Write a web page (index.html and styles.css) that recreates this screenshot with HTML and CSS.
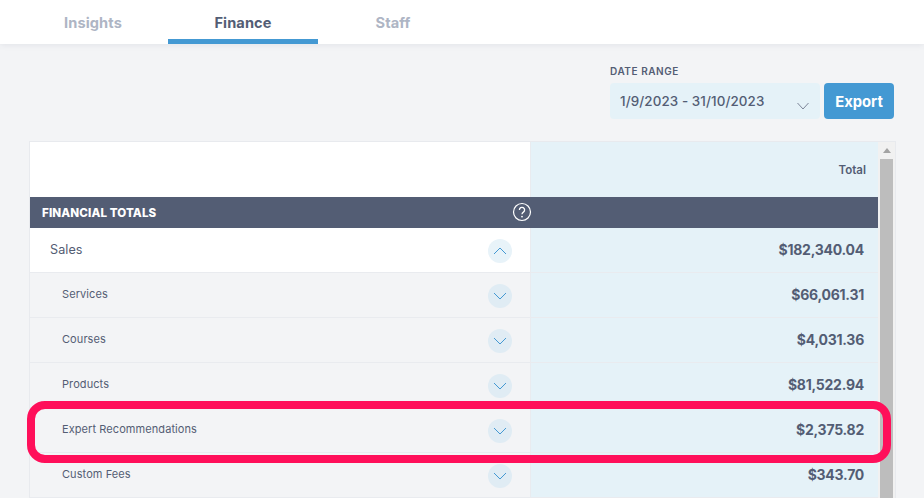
FILE: index.html
```html
<!DOCTYPE html>
<html lang="en">
<head>
<meta charset="utf-8">
<title>Finance</title>
<link rel="stylesheet" href="styles.css">
</head>
<body>
<nav class="tabs">
  <a class="tab tab-first">Insights</a>
  <a class="tab active">Finance</a>
  <a class="tab">Staff</a>
</nav>
<main class="page">
  <div class="toolbar">
    <div class="field">
      <label class="field-label">DATE RANGE</label>
      <div class="select">
        <span>1/9/2023 - 31/10/2023</span>
        <svg class="select-caret" width="14" height="8" viewBox="0 0 14 8"><path d="M1.5 1l5.5 6 5.5-6" fill="none" stroke="#7d8699" stroke-width="1"/></svg>
      </div>
    </div>
    <button class="export">Export</button>
  </div>
  <div class="table-wrap">
    <div class="table">
      <div class="row head"><div class="label"></div><div class="value total">Total</div></div>
      <div class="section">
        <span>FINANCIAL TOTALS</span>
        <svg class="help" width="20" height="20" viewBox="0 0 20 20"><circle cx="10" cy="10" r="8.5" fill="none" stroke="#fff" stroke-width="1.2"/><path d="M7.4 7.9a2.6 2.6 0 1 1 4 2.2c-.9.6-1.4 1-1.4 2.1" fill="none" stroke="#fff" stroke-width="1.3"/><circle cx="10" cy="14.6" r=".9" fill="#fff"/></svg>
      </div>
      <div class="row main">
        <div class="label"><span>Sales</span><span class="toggle"><svg width="14" height="8" viewBox="0 0 14 8"><path d="M1 7l6-6 6 6"/></svg></span></div>
        <div class="value">$182,340.04</div>
      </div>
      <div class="row">
        <div class="label"><span>Services</span><span class="toggle"><svg width="14" height="8" viewBox="0 0 14 8"><path d="M1 1l6 6 6-6"/></svg></span></div>
        <div class="value">$66,061.31</div>
      </div>
      <div class="row">
        <div class="label"><span>Courses</span><span class="toggle"><svg width="14" height="8" viewBox="0 0 14 8"><path d="M1 1l6 6 6-6"/></svg></span></div>
        <div class="value">$4,031.36</div>
      </div>
      <div class="row">
        <div class="label"><span>Products</span><span class="toggle"><svg width="14" height="8" viewBox="0 0 14 8"><path d="M1 1l6 6 6-6"/></svg></span></div>
        <div class="value">$81,522.94</div>
      </div>
      <div class="row">
        <div class="label"><span>Expert Recommendations</span><span class="toggle"><svg width="14" height="8" viewBox="0 0 14 8"><path d="M1 1l6 6 6-6"/></svg></span></div>
        <div class="value">$2,375.82</div>
      </div>
      <div class="row">
        <div class="label"><span>Custom Fees</span><span class="toggle"><svg width="14" height="8" viewBox="0 0 14 8"><path d="M1 1l6 6 6-6"/></svg></span></div>
        <div class="value">$343.70</div>
      </div>
    </div>
    <div class="scrollbar">
      <div class="scroll-up"></div>
      <div class="scroll-thumb"></div>
    </div>
    <div class="highlight"></div>
  </div>
</main>
</body>
</html>
```
FILE: styles.css
```css
* { box-sizing: border-box; }
html, body { margin: 0; height: 100%; }
body {
  width: 924px; height: 498px; overflow: hidden;
  background: #f3f4f6;
  font-family: "Inter", "Liberation Sans", sans-serif;
  color: #535d74;
}
.tabs {
  display: flex; height: 44px; background: #fff; padding-left: 18px;
  box-shadow: 0 1px 6px rgba(83, 93, 116, .1);
  position: relative;
}
.tab {
  width: 150px; height: 44px; line-height: 47px; text-align: center;
  font-size: 14.6px; font-weight: 700; color: #aeb5c4;
  letter-spacing: .1px;
}
.tab.active { color: #535d74; border-bottom: 5px solid #4499d3; }
.page { padding: 0 28px 0 29px; }
.toolbar {
  display: flex; justify-content: flex-end; align-items: flex-end; gap: 4px;
  height: 75px; padding-right: 2px;
}
.field { display: flex; flex-direction: column; gap: 6px; }
.field-label { font-size: 10px; font-weight: 600; line-height: 12px; letter-spacing: .55px; }
.select {
  width: 210px; height: 36px; background: #e5f2f8; border-radius: 4px;
  display: flex; align-items: center; justify-content: space-between;
  padding: 0 10px 0 10px; font-size: 13.4px; font-weight: 500; letter-spacing: .1px;
}
.select-caret { margin-top: 9px; }
.export {
  width: 70px; height: 36px; border: 0; border-radius: 4px; background: #4499d3;
  color: #fff; font: 700 14.8px "Inter", "Liberation Sans", sans-serif; padding: 2px 0 0;
}
.table-wrap {
  position: relative; display: flex; margin-top: 22px;
  border: 1px solid #e8eaee; border-bottom: 0; width: 867px; height: 357px;
}
.table { width: 848px; flex: none; }
.row { display: flex; height: 45px; border-bottom: 1px solid #e9ebef; }
.row.head { height: 55px; border: 0; background: #fff; }
.row.main { background: #fff; }
.label {
  width: 501px; flex: none; display: flex; align-items: center; justify-content: space-between;
  padding: 0 18px 0 32px; font-size: 11px; font-weight: 400; letter-spacing: .08px;
  border-right: 1px solid #e9ebef;
}
.row.main .label { padding-left: 20px; font-size: 12.6px; }
.label span:first-child { margin-top: -2px; }
.value {
  flex: 1; background: #e5f2f8; text-align: right; padding: 0 14px 0 0;
  font-size: 14px; font-weight: 700; line-height: 44px; letter-spacing: -.25px;
}
.value.total { font-size: 11.5px; font-weight: 600; line-height: 56px; padding-right: 12px; letter-spacing: 0; }
.section {
  height: 31px; background: #535d74; color: #fff; display: flex; align-items: center;
  justify-content: space-between; padding: 0 8px 0 12px;
  font-size: 11.6px; font-weight: 800; letter-spacing: .1px; width: 848px;
}
.help { margin-right: 338px; margin-top: -1px; }
.toggle {
  width: 24px; height: 24px; border-radius: 50%; background: #e0ecf4;
  display: flex; align-items: center; justify-content: center; margin-top: 1px;
}
.row.main .toggle { background: #e8f3f9; }
.toggle svg path { fill: none; stroke: #4499d3; stroke-width: 1; }
.scrollbar { width: 17px; background: #f1f1f1; flex: none; }
.scroll-up {
  width: 0; height: 0; margin: 6px auto 6px;
  border: 4px solid transparent; border-top: 0; border-bottom: 5px solid #a3a3a3;
}
.scroll-thumb { height: 340px; background: #bdbdbd; margin: 0 2px; }
.highlight {
  position: absolute; left: -3px; top: 259px; width: 864px; height: 62px;
  border: 8px solid #ff0f5a; border-radius: 18px; pointer-events: none;
}
```
